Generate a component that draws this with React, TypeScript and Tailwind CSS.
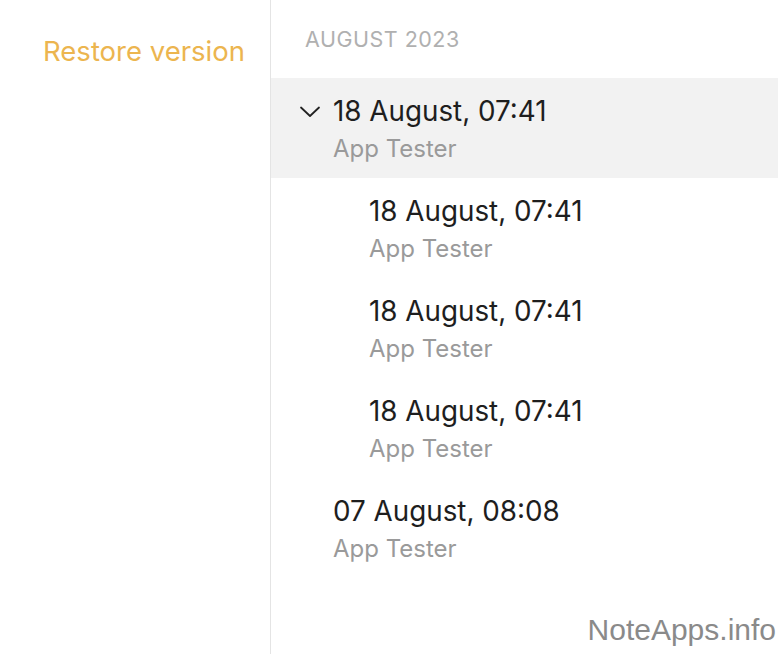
const versions = [
  { date: '18 August, 07:41', author: 'App Tester', level: 1 },
  { date: '18 August, 07:41', author: 'App Tester', level: 1 },
  { date: '18 August, 07:41', author: 'App Tester', level: 1 },
  { date: '07 August, 08:08', author: 'App Tester', level: 0 },
];

function Chevron() {
  return (
    <svg width="22" height="14" viewBox="0 0 22 14" className="text-[#222]">
      <path d="M2 2.5 L11 11 L20 2.5" fill="none" stroke="currentColor" strokeWidth="1.8" strokeLinecap="round" strokeLinejoin="round" />
    </svg>
  );
}

export default function App() {
  return (
    <div className="relative flex h-[654px] w-[778px] bg-white font-['Inter',sans-serif] overflow-hidden">
      <div className="w-[271px] shrink-0 border-r border-[#e4e4e4] pt-[34px] pr-[25px] text-right">
        <span className="text-[27.5px] leading-[34px] text-[#ecb54f]">Restore version</span>
      </div>
      <div className="flex-1">
        <div className="h-[78px] pl-[34px] pt-[26px] text-[21.5px] leading-[26px] tracking-[0.5px] text-[#b0b0b0]">AUGUST 2023</div>
        <div className="flex h-[100px] bg-[#f2f2f2] pl-[28px] pt-[16px]">
          <div className="mt-[11px] w-[34px]">
            <Chevron />
          </div>
          <div>
            <div className="text-[27.8px] leading-[34px] text-[#1e1e1e]">18 August, 07:41</div>
            <div className="mt-[7px] text-[24px] leading-[28px] text-[#9a9a9a]">App Tester</div>
          </div>
        </div>
        {versions.map((v, i) => (
          <div key={i} className={`h-[100px] pt-[16px] ${v.level === 1 ? 'pl-[98px]' : 'pl-[62px]'}`}>
            <div className="text-[27.8px] leading-[34px] text-[#1e1e1e]">{v.date}</div>
            <div className="mt-[7px] text-[24px] leading-[28px] text-[#9a9a9a]">{v.author}</div>
          </div>
        ))}
      </div>
      <div className="absolute bottom-[2px] right-[2px] font-['Liberation_Sans',Arial,sans-serif] text-[30px] text-[#8a8a8a]">
        NoteApps.info
      </div>
    </div>
  );
}
